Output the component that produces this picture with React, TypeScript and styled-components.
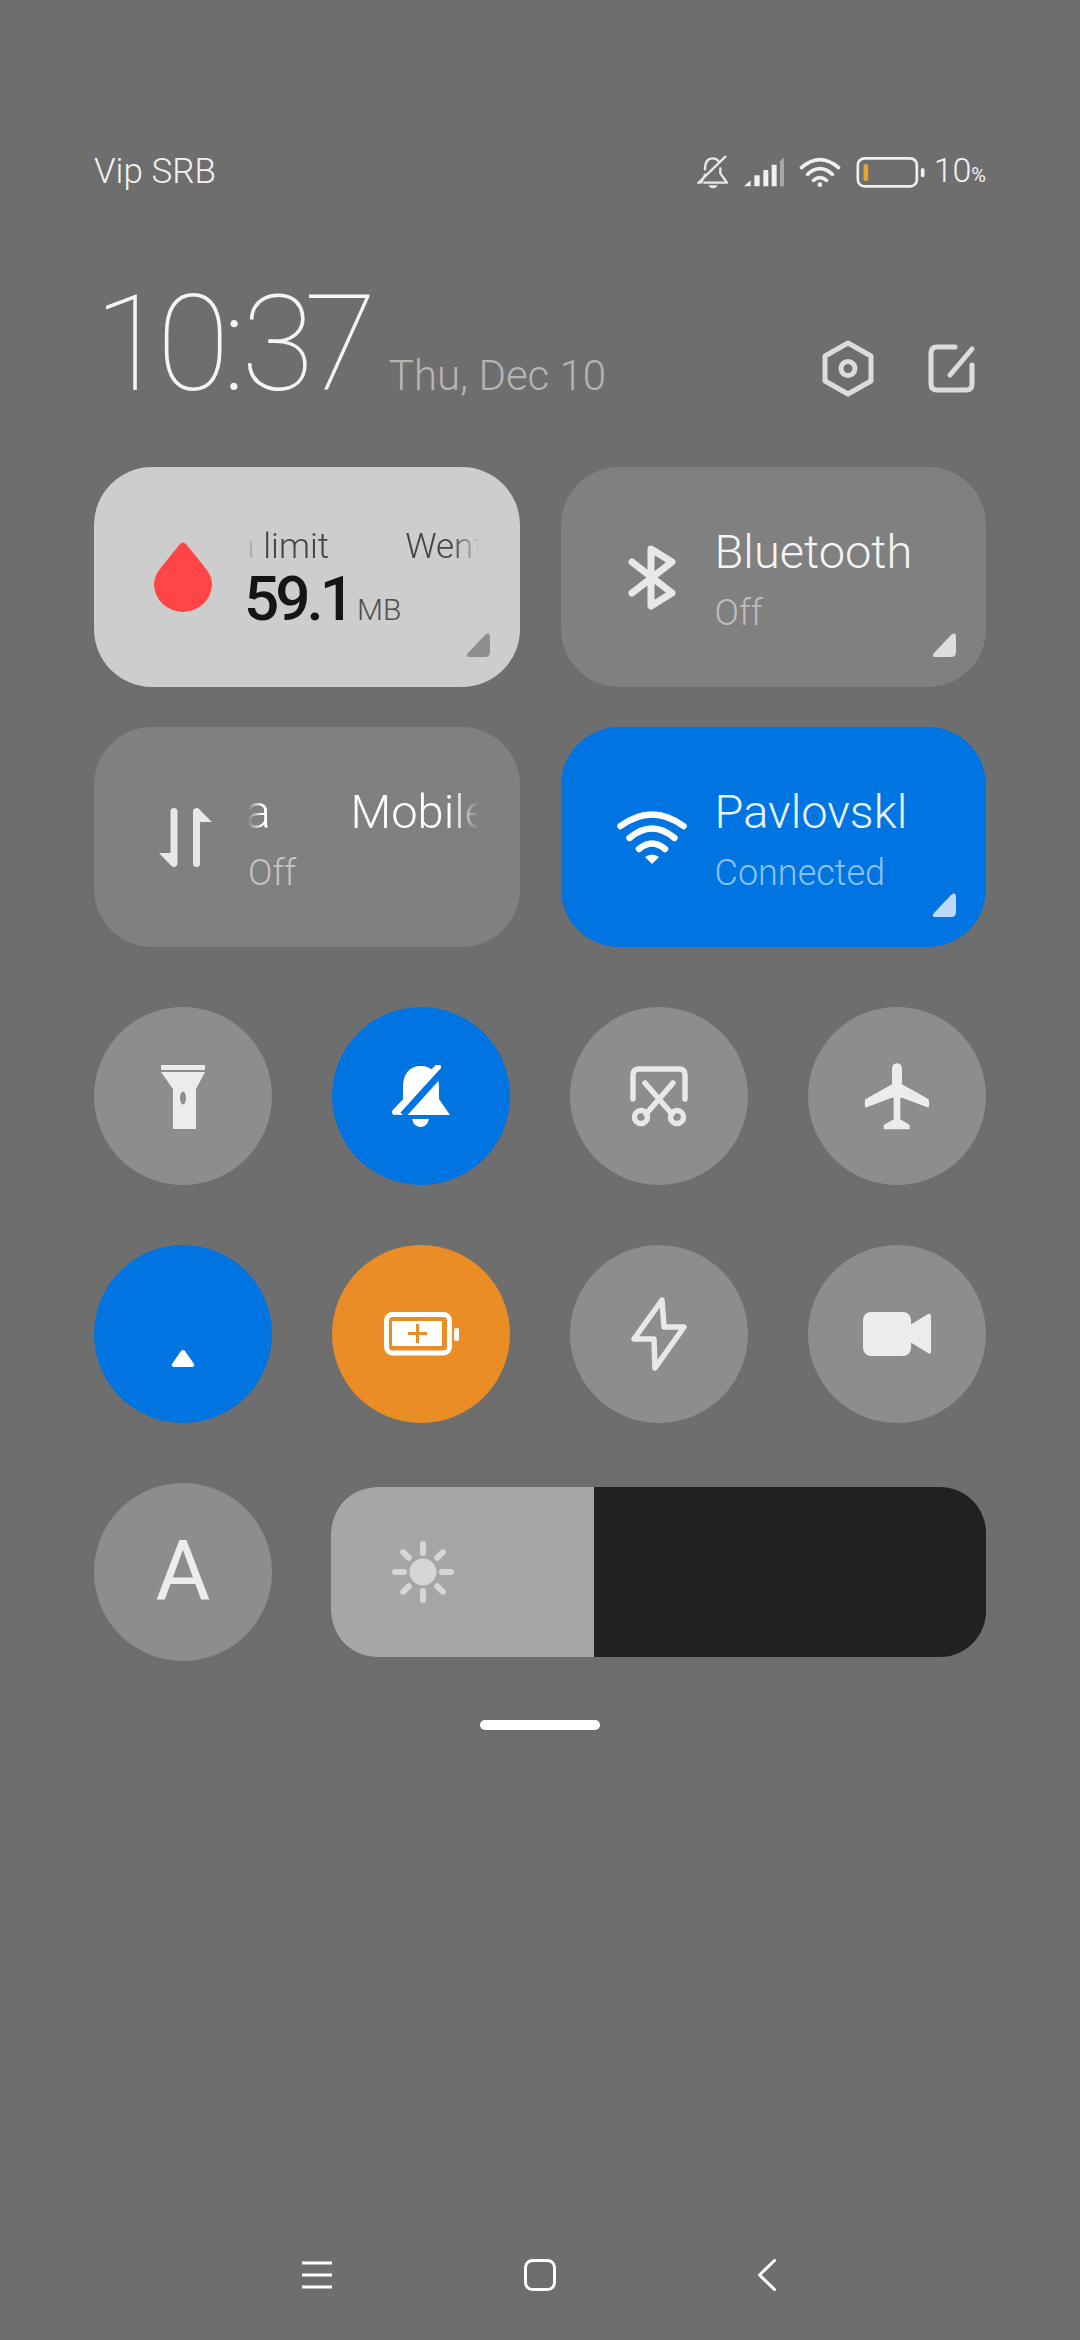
import React from "react";
import styled, { createGlobalStyle } from "styled-components";

const Global = createGlobalStyle`
  html, body { margin: 0; padding: 0; background: #6e6e6e; }
  * { box-sizing: border-box; }
`;

const Page = styled.div`
  width: 1080px;
  height: 2340px;
  padding: 152px 94px 0 94px;
  background: #6e6e6e;
  font-family: Roboto, "Noto Sans", sans-serif;
  display: flex;
  flex-direction: column;
  overflow: hidden;
`;

const StatusBar = styled.div`
  height: 40px;
  display: flex;
  align-items: center;
  justify-content: space-between;
  color: #f2f2f2;
`;
const Carrier = styled.span`
  font-size: 35px;
  font-weight: 300;
  line-height: 40px;
`;
const StatusIcons = styled.div`
  display: flex;
  align-items: center;
  gap: 15px;
`;
const BatteryText = styled.span`
  font-size: 34px;
  font-weight: 300;
  line-height: 40px;
  color: #f2f2f2;
  margin-left: -6px;
`;
const Percent = styled.span`
  font-size: 20px;
  font-weight: 400;
`;

const Header = styled.div`
  margin-top: 83px;
  height: 140px;
  display: flex;
  align-items: baseline;
`;
const Clock = styled.span`
  font-size: 133px;
  font-weight: 100;
  line-height: 140px;
  letter-spacing: -10px;
  color: #f5f5f5;
`;
const ClockColon = styled.span`
  margin: 0 5px 0 3px;
`;
const DateText = styled.span`
  margin-left: 22px;
  font-size: 42px;
  font-weight: 300;
  color: #b4b4b4;
`;
const HeaderActions = styled.div`
  margin-left: auto;
  margin-right: 11px;
  margin-bottom: 18px;
  align-self: flex-end;
  display: flex;
  align-items: center;
  gap: 54px;
`;

const TileGrid = styled.div`
  margin-top: 52px;
  display: grid;
  grid-template-columns: 1fr 1fr;
  gap: 40px 41px;
`;
const Tile = styled.div<{ $tone: "light" | "grey" | "blue" }>`
  position: relative;
  height: 220px;
  border-radius: 58px;
  display: flex;
  align-items: center;
  overflow: hidden;
  background: ${(p) => (p.$tone === "light" ? "#cdcdcd" : p.$tone === "blue" ? "#0074e0" : "#808080")};
`;
const TileIcon = styled.div`
  width: 154px;
  padding-left: 28px;
  flex: none;
  display: flex;
  justify-content: center;
`;
const TileBody = styled.div<{ $top?: number }>`
  width: 231px;
  padding-top: ${(p) => p.$top ?? 6}px;
  display: flex;
  flex-direction: column;
`;
const Title = styled.div<{ $color: string }>`
  font-size: 47px;
  font-weight: 300;
  line-height: 60px;
  margin-top: -1px;
  margin-bottom: 1px;
  white-space: nowrap;
  color: ${(p) => p.$color};
`;
const Sub = styled.div<{ $color: string }>`
  margin-top: 5px;
  font-size: 36px;
  font-weight: 300;
  line-height: 50px;
  color: ${(p) => p.$color};
`;
const Marquee = styled.div`
  overflow: hidden;
  white-space: nowrap;
  -webkit-mask-image: linear-gradient(90deg, transparent 0, #000 14px, #000 calc(100% - 26px), transparent 100%);
  mask-image: linear-gradient(90deg, transparent 0, #000 14px, #000 calc(100% - 26px), transparent 100%);
`;
const Track = styled.div<{ $shift: number; $gap: number }>`
  display: inline-flex;
  gap: ${(p) => p.$gap}px;
  transform: translateX(${(p) => p.$shift}px);
`;
const DataLabel = styled.span`
  font-size: 35px;
  font-weight: 300;
  line-height: 42px;
  color: #444444;
`;
const DataRow = styled.div`
  margin: 3px 0 0 -4px;
  display: flex;
  align-items: baseline;
  gap: 6px;
  line-height: 56px;
`;
const DataValue = styled.span`
  font-size: 62px;
  font-weight: 500;
  letter-spacing: -4px;
  color: #151515;
`;
const DataUnit = styled.span`
  font-size: 30px;
  font-weight: 300;
  color: #505050;
`;
const Corner = styled.svg`
  position: absolute;
  right: 30px;
  bottom: 30px;
`;

const CircleGrid = styled.div`
  margin-top: 60px;
  display: grid;
  grid-template-columns: repeat(4, 178px);
  justify-content: space-between;
  row-gap: 60px;
`;
const Circle = styled.div<{ $bg?: string }>`
  width: 178px;
  height: 178px;
  flex: none;
  border-radius: 50%;
  display: flex;
  align-items: center;
  justify-content: center;
  background: ${(p) => p.$bg || "#8d8d8d"};
`;
const FontLetter = styled.span`
  font-size: 84px;
  font-weight: 400;
  line-height: 82px;
  color: #ececec;
`;
const BottomRow = styled.div`
  margin-top: 60px;
  display: flex;
  align-items: center;
  gap: 59px;
`;
const Slider = styled.div`
  flex: 1;
  height: 170px;
  border-radius: 46px;
  background: #212123;
  overflow: hidden;
  display: flex;
`;
const SliderFill = styled.div`
  background: #a6a6a6;
  display: flex;
  align-items: center;
  padding-left: 61px;
`;
const Handle = styled.div`
  margin: 59px auto 0;
  width: 120px;
  height: 10px;
  border-radius: 5px;
  background: #fff;
  flex: none;
`;
const NavBar = styled.div`
  margin-top: auto;
  margin-left: -2px;
  padding-bottom: 49px;
  display: flex;
  align-items: center;
  justify-content: center;
  gap: 192px;
`;
const BackWrap = styled.div`
  margin-left: 10px;
  display: flex;
`;

const Sv = styled.svg`
  display: block;
  flex: none;
`;
const DropSvg = styled(Sv)`
  margin-right: 4px;
`;

const Triangle = ({ fill }: { fill: string }) => (
  <Corner width="24" height="24" viewBox="0 0 24 24">
    <path d="M19 2 Q24 -2 24 5 V19 Q24 24 19 24 H3 Q-1 24 2 20 Z" fill={fill} />
  </Corner>
);

const Drop = () => (
  <DropSvg width="58" height="70" viewBox="0 0 58 70">
    <path d="M26 2 Q29 -1 32 2 L49 23 Q58 33 58 42 A29 28 0 0 1 0 42 Q0 33 9 23 Z" fill="#ff4545" />
  </DropSvg>
);
const Bluetooth = () => (
  <Sv width="48" height="65" viewBox="0 0 48 65" fill="none" stroke="#e8e8e8" strokeWidth="7" strokeLinecap="round" strokeLinejoin="round">
    <path d="M4 17 L44 48 L23 61 V4 L44 17 L4 48" />
  </Sv>
);
const DataArrows = () => (
  <Sv width="53" height="59" viewBox="0 0 53 59" fill="#e8e8e8">
    <path d="M11.5 3.5 a3.5 3.5 0 0 1 7 0 V55.5 a3.5 3.5 0 0 1 -6 2.4 L0 45 H11.5 Z" />
    <path d="M34 3.5 a3.5 3.5 0 0 1 6 -2.4 L53 14 H41 V55.5 a3.5 3.5 0 0 1 -7 0 Z" />
  </Sv>
);
const WifiLarge = () => (
  <Sv width="70" height="53" viewBox="0 0 70 53" fill="none" stroke="#fff" strokeWidth="6.5" strokeLinecap="round">
    <path d="M3.5 15 Q35 -8 66.5 15" />
    <path d="M12.5 27 Q35 8 57.5 27" />
    <path d="M22 38 Q35 27 48 38" />
    <path d="M28 46 Q35 41 42 46 L35 53 Z" fill="#fff" stroke="none" />
  </Sv>
);
const Flash = () => (
  <Sv width="44" height="65" viewBox="0 0 44 65" fill="#ececec">
    <rect x="0" y="1" width="44" height="5" rx="1" />
    <path d="M0 8 H44 L35 25 V65 H12 V25 Z" />
    <ellipse cx="22" cy="34" rx="3" ry="6.5" fill="#8d8d8d" />
  </Sv>
);
const BellOff = () => (
  <Sv width="59" height="62" viewBox="0 0 59 62">
    <path d="M29 1 C17 1 11 9 11 22 V36 L5 50 H58 L47 34 V22 C47 9 40 1 29 1 Z" fill="#fff" />
    <path d="M48 9 L11 50" stroke="#0074e0" strokeWidth="7" />
    <path d="M46 2 L3 47" stroke="#fff" strokeWidth="6" strokeLinecap="round" />
    <path d="M20 54 H37 Q35 62 28.5 62 Q22 62 20 54 Z" fill="#fff" />
  </Sv>
);
const Scissors = () => (
  <Sv width="58" height="61" viewBox="0 0 58 61" fill="none" stroke="#e8e8e8" strokeWidth="5.5" strokeLinecap="round">
    <path d="M3 33 V9 Q3 3 9 3 H49 Q55 3 55 9 V33" />
    <path d="M15 17 L42 48" />
    <path d="M43 17 L16 48" />
    <circle cx="11" cy="51" r="6.5" />
    <circle cx="47" cy="51" r="6.5" />
  </Sv>
);
const Plane = () => (
  <Sv width="90" height="80" viewBox="5 0 270 240" fill="#ececec">
    <path d="M125 40 Q125 22 140 22 Q155 22 155 40 V85 L235 130 Q239 142 235 155 L155 125 H150 V190 L178 207 V220 H100 V207 L130 190 V125 H125 L45 155 Q41 142 45 130 L125 85 Z" />
  </Sv>
);
const TriangleUp = () => (
  <Sv width="70" height="70" viewBox="0 0 70 70">
    <path d="M33 52 Q35 50 37 52 L46 65 Q47 68 44 68 H26 Q23 68 24 65 Z" fill="#fff" />
  </Sv>
);
const BatterySaver = () => (
  <Sv width="75" height="44" viewBox="0 0 75 44">
    <rect x="2.5" y="2.5" width="63" height="38.5" rx="6" fill="none" stroke="#fff" strokeWidth="5" />
    <rect x="8" y="9" width="50" height="25" fill="#fff" />
    <path d="M24 21.5 H43 M33.5 12 V31" stroke="#eb8d25" strokeWidth="3" />
    <rect x="70" y="16" width="5" height="13" rx="2" fill="#fff" />
  </Sv>
);
const Bolt = () => (
  <Sv width="56" height="74" viewBox="0 0 56 74" fill="none" stroke="#e8e8e8" strokeWidth="5.5" strokeLinejoin="round">
    <path d="M31 3 L3 42 H23 L24 71 L53 30 H33 Z" />
  </Sv>
);
const Video = () => (
  <Sv width="68" height="44" viewBox="0 0 68 44" fill="#ececec">
    <rect x="0" y="0" width="48" height="44" rx="8" />
    <path d="M47 13 L65 2 Q68 1 68 4 V40 Q68 43 65 41 L47 30 Z" />
  </Sv>
);
const Sun = () => (
  <Sv width="62" height="62" viewBox="0 0 62 62" stroke="#d6d6d6" strokeWidth="6" strokeLinecap="round">
    <circle cx="31" cy="31" r="13.5" fill="#d6d6d6" stroke="none" />
    {[0, 45, 90, 135, 180, 225, 270, 315].map((a) => (
      <path key={a} d={a % 90 === 0 ? "M31 3 V12" : "M31 3 V11"} transform={`rotate(${a} 31 31)`} />
    ))}
  </Sv>
);

const StatusBell = () => (
  <Sv width="32" height="34" viewBox="50 45 96 102" fill="none" stroke="#e8e8e8" strokeWidth="7" strokeLinecap="round" strokeLinejoin="round">
    <path d="M74 88 Q74 55 97 55 Q110 55 116 66 M120 85 V100 L140 128 H72 M62 128 L74 104" />
    <path d="M135 50 L54 129" />
    <path d="M84 136 H112 Q108 145 98 145 Q88 145 84 136 Z" fill="#e8e8e8" stroke="none" />
  </Sv>
);
const Signal = () => (
  <Sv width="40" height="30" viewBox="185 45 120 90" fill="#f0f0f0">
    <path d="M185 133 L205 115 V133 Z" />
    <rect x="216" y="100" width="16" height="33" rx="2" />
    <rect x="243" y="84" width="15" height="49" rx="2" />
    <rect x="268" y="68" width="15" height="65" rx="2" />
    <path d="M293 57 L305 47 V133 H293 Z" fill="#a8a8a8" />
  </Sv>
);
const WifiSmall = () => (
  <Sv width="42" height="30" viewBox="355 48 125 90" fill="none" stroke="#efefef" strokeWidth="11" strokeLinecap="round">
    <path d="M362 80 Q417 32 473 80" />
    <path d="M380 100 Q417 66 455 100" />
    <path d="M398 118 Q417 102 437 118" />
    <circle cx="417" cy="131" r="7" fill="#efefef" stroke="none" />
  </Sv>
);
const BatteryStatus = () => (
  <Sv width="69" height="31" viewBox="528 46 206 93" fill="none">
    <rect x="533" y="50" width="177" height="84" rx="20" stroke="#f0f0f0" strokeWidth="8" />
    <rect x="550" y="68" width="14" height="49" rx="3" fill="#e8a22e" />
    <rect x="722" y="80" width="11" height="26" rx="4" fill="#f0f0f0" />
  </Sv>
);
const HexSettings = () => (
  <Sv width="52" height="57" viewBox="0 0 52 57" fill="none" stroke="#dcdcdc" strokeWidth="5" strokeLinejoin="round">
    <path d="M26 3 L49 16 V41 L26 54 L3 41 V16 Z" />
    <circle cx="26" cy="28.5" r="7" />
  </Sv>
);
const EditSquare = () => (
  <Sv width="47" height="49" viewBox="0 0 47 49" fill="none" stroke="#dcdcdc" strokeWidth="5" strokeLinecap="round">
    <path d="M27 3 H9 Q3 3 3 9 V40 Q3 46 9 46 H38 Q44 46 44 40 V21" />
    <path d="M44 5 L22 31" />
  </Sv>
);
const NavMenu = () => (
  <Sv width="30" height="28" viewBox="0 0 30 28" stroke="#fff" strokeWidth="3">
    <path d="M0 2 H30 M0 14 H30 M0 26 H30" />
  </Sv>
);
const NavHome = () => (
  <Sv width="32" height="32" viewBox="0 0 32 32" fill="none" stroke="#fff" strokeWidth="3">
    <rect x="1.5" y="1.5" width="29" height="29" rx="7" />
  </Sv>
);
const NavBack = () => (
  <Sv width="18" height="32" viewBox="0 0 18 32" fill="none" stroke="#fff" strokeWidth="3" strokeLinecap="round" strokeLinejoin="round">
    <path d="M16.5 1.5 L1.5 16 L16.5 30.5" />
  </Sv>
);

export default function App() {
  return (
    <Page>
      <Global />
      <StatusBar>
        <Carrier>Vip SRB</Carrier>
        <StatusIcons>
          <StatusBell />
          <Signal />
          <WifiSmall />
          <BatteryStatus />
          <BatteryText>
            10<Percent>%</Percent>
          </BatteryText>
        </StatusIcons>
      </StatusBar>

      <Header>
        <Clock>
          10<ClockColon>:</ClockColon>37
        </Clock>
        <DateText>Thu, Dec 10</DateText>
        <HeaderActions>
          <HexSettings />
          <EditSquare />
        </HeaderActions>
      </Header>

      <TileGrid>
        <Tile $tone="light">
          <TileIcon>
            <Drop />
          </TileIcon>
          <TileBody $top={9}>
            <Marquee>
              <Track $shift={-65} $gap={76}>
                <DataLabel>Data limit</DataLabel>
                <DataLabel>Went over</DataLabel>
              </Track>
            </Marquee>
            <DataRow>
              <DataValue>59.1</DataValue>
              <DataUnit>MB</DataUnit>
            </DataRow>
          </TileBody>
          <Triangle fill="#8f8f8f" />
        </Tile>
        <Tile $tone="grey">
          <TileIcon>
            <Bluetooth />
          </TileIcon>
          <TileBody>
            <Title $color="#f4f4f4">Bluetooth</Title>
            <Sub $color="#bdbdbd">Off</Sub>
          </TileBody>
          <Triangle fill="#dddddd" />
        </Tile>
        <Tile $tone="grey">
          <TileIcon>
            <DataArrows />
          </TileIcon>
          <TileBody>
            <Marquee>
              <Track $shift={-219} $gap={80}>
                <Title $color="#ffffff">Mobile data</Title>
                <Title $color="#ffffff">Mobile data</Title>
              </Track>
            </Marquee>
            <Sub $color="#c4c4c4">Off</Sub>
          </TileBody>
        </Tile>
        <Tile $tone="blue">
          <TileIcon>
            <WifiLarge />
          </TileIcon>
          <TileBody>
            <Title $color="#e8f4ff">Pavlovskl</Title>
            <Sub $color="#8fc3f6">Connected</Sub>
          </TileBody>
          <Triangle fill="#bcd9f8" />
        </Tile>
      </TileGrid>

      <CircleGrid>
        <Circle>
          <Flash />
        </Circle>
        <Circle $bg="#0074e0">
          <BellOff />
        </Circle>
        <Circle>
          <Scissors />
        </Circle>
        <Circle>
          <Plane />
        </Circle>
        <Circle $bg="#0074e0">
          <TriangleUp />
        </Circle>
        <Circle $bg="#eb8d25">
          <BatterySaver />
        </Circle>
        <Circle>
          <Bolt />
        </Circle>
        <Circle>
          <Video />
        </Circle>
      </CircleGrid>

      <BottomRow>
        <Circle>
          <FontLetter>A</FontLetter>
        </Circle>
        <Slider>
          <SliderFill style={{ width: `${(263 / 655) * 100}%` }}>
            <Sun />
          </SliderFill>
        </Slider>
      </BottomRow>

      <Handle />

      <NavBar>
        <NavMenu />
        <NavHome />
        <BackWrap>
          <NavBack />
        </BackWrap>
      </NavBar>
    </Page>
  );
}
